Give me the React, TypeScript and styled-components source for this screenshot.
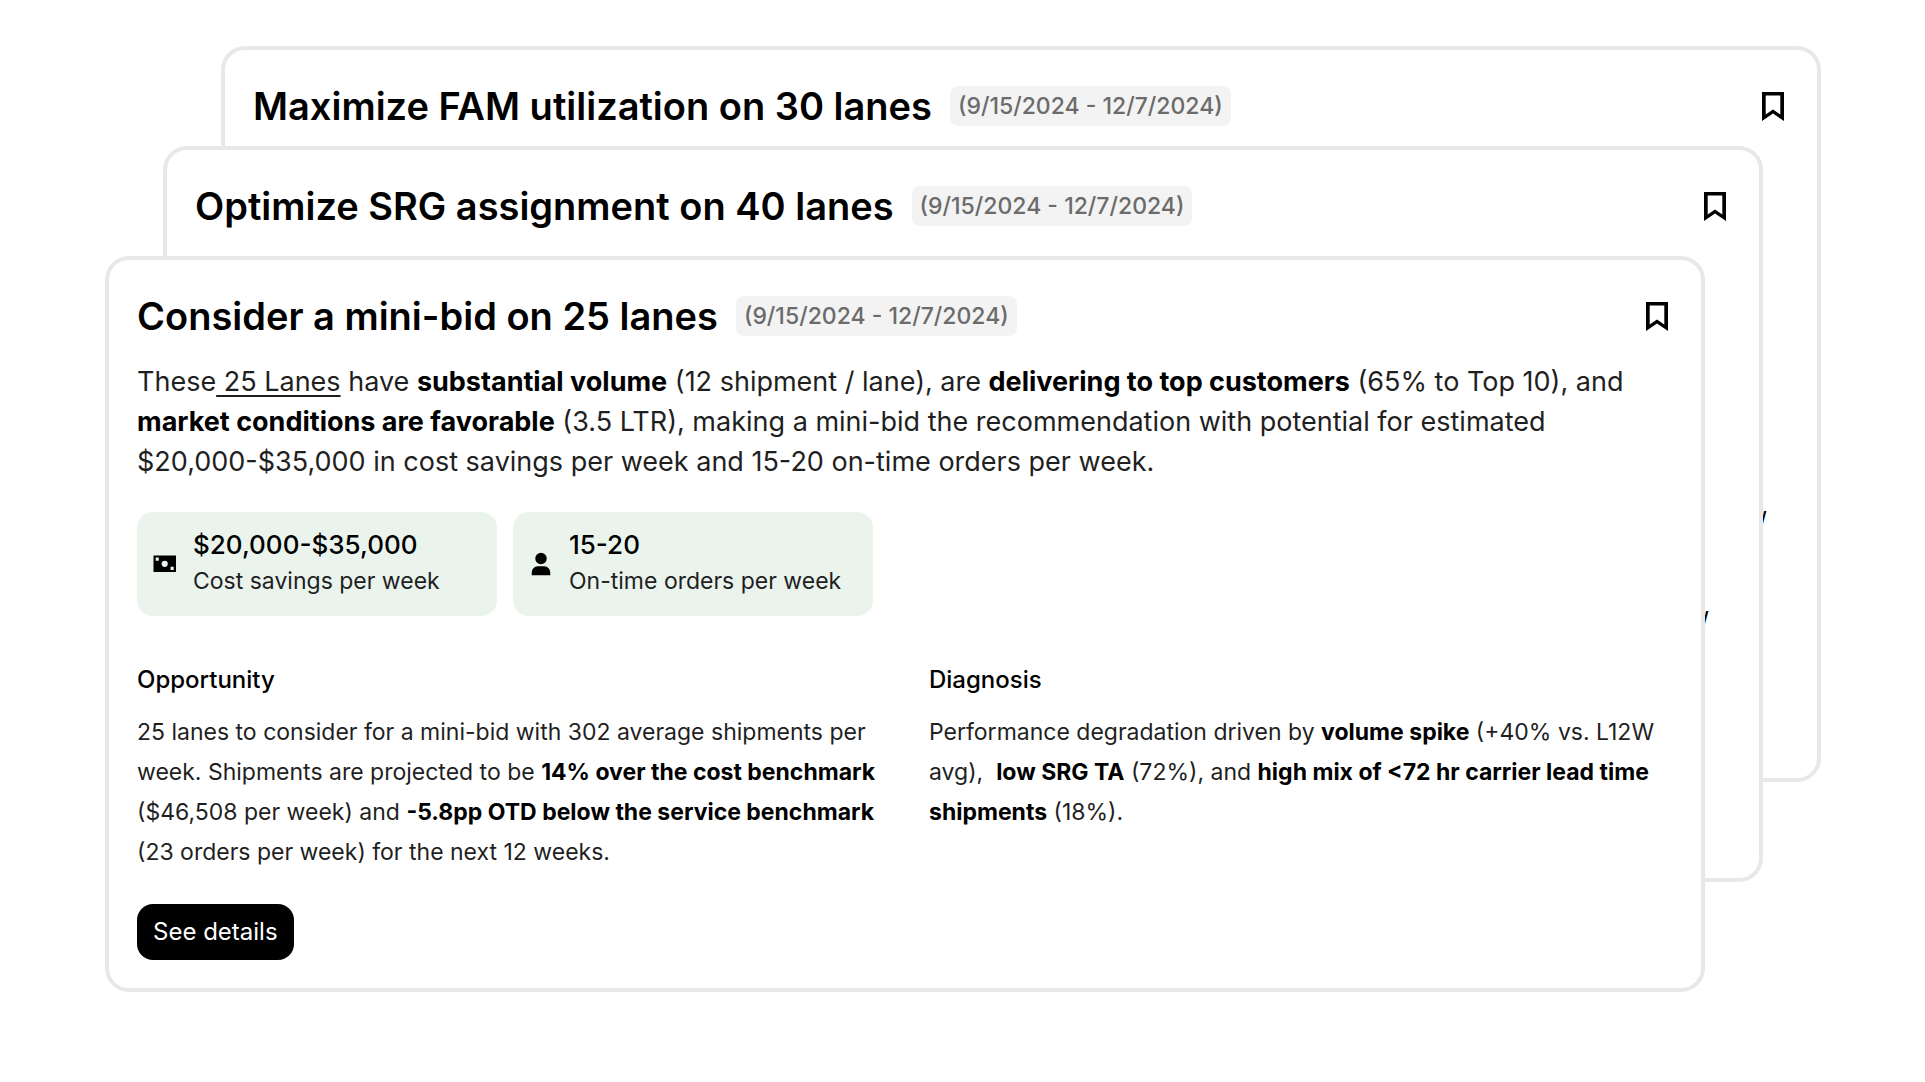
import React from 'react';
import styled, { createGlobalStyle } from 'styled-components';

const GlobalStyle = createGlobalStyle`
  *, *::before, *::after { box-sizing: border-box; }
  body {
    margin: 0;
    background: #fff;
    color: #000;
    font-family: Inter, "Liberation Sans", sans-serif;
  }
  h2, h3, p { margin: 0; }
`;

const Stack = styled.main`
  display: grid;
  padding: 46px 104px 44px 105px;
`;

const Card = styled.article<{ $inset: number; $top: number }>`
  grid-area: 1 / 1;
  display: flex;
  flex-direction: column;
  align-items: stretch;
  margin: ${p => p.$top}px ${p => 116 - p.$inset}px ${p => 210 - p.$top}px ${p => p.$inset}px;
  padding: 32px 28px 28px;
  border: 4px solid #e8e8e8;
  border-radius: 24px;
  background: #fff;
`;

const Header = styled.header`
  display: flex;
  align-items: center;
  gap: 18px;
`;

const Title = styled.h2`
  font-size: 38px;
  font-weight: 600;
  line-height: 48px;
`;

const DateRange = styled.span`
  padding: 0 8px;
  border-radius: 8px;
  background: #f3f3f3;
  color: #6b6b6b;
  font-size: 23px;
  font-weight: 500;
  line-height: 40px;
  white-space: nowrap;
`;

const IconButton = styled.button`
  display: flex;
  margin-left: auto;
  padding: 0;
  border: 0;
  background: none;
  color: inherit;
  cursor: pointer;
`;

const Lead = styled.p`
  margin-top: 22px;
  color: #1f1f1f;
  font-size: 27px;
  font-weight: 400;
  line-height: 40px;
`;

const Strong = styled.strong`
  color: #000;
  font-weight: 700;
`;

const LaneLink = styled.a`
  color: inherit;
  text-decoration: underline;
  text-decoration-thickness: 2px;
  text-underline-offset: 4px;
`;

const NoWrap = styled.span`
  white-space: nowrap;
`;

const Stats = styled.div`
  display: flex;
  gap: 16px;
  margin-top: 30px;
`;

const Stat = styled.div`
  display: flex;
  align-items: center;
  gap: 16px;
  width: 360px;
  min-height: 104px;
  padding: 0 16px;
  border-radius: 16px;
  background: #eaf4ed;
`;

const StatText = styled.div`
  padding-bottom: 2px;
`;

const StatValue = styled.div`
  font-size: 26px;
  font-weight: 500;
  line-height: 36px;
`;

const StatLabel = styled.div`
  color: #1f1f1f;
  font-size: 23px;
  font-weight: 400;
  line-height: 36px;
`;

const Columns = styled.div`
  display: grid;
  grid-template-columns: 1fr 1fr;
  gap: 48px;
  margin-top: 48px;
`;

const SectionTitle = styled.h3`
  font-size: 24px;
  font-weight: 500;
  line-height: 32px;
`;

const SectionText = styled.p`
  margin-top: 16px;
  color: #1f1f1f;
  font-size: 23px;
  font-weight: 400;
  line-height: 40px;
`;

const DetailsButton = styled.button`
  align-self: flex-start;
  margin-top: 32px;
  padding: 0 16px;
  border: 0;
  border-radius: 16px;
  background: #000;
  color: #fff;
  font-family: inherit;
  font-size: 24px;
  font-weight: 400;
  line-height: 56px;
  cursor: pointer;
`;

const PeekingText = styled.p`
  margin-top: 370px;
  padding-right: 22px;
  font-size: 23px;
  font-weight: 400;
  line-height: 40px;
  text-align: right;
`;

const BookmarkIcon = () => (
  <svg width="32" height="32" viewBox="0 0 32 32" fill="currentColor" fillRule="evenodd" aria-hidden="true">
    <path d="M5 2H27V31L16 23.6L5 31ZM8.7 5.5V24.4L16 19.6L23.3 24.4V5.5Z" />
  </svg>
);

const CashIcon = () => (
  <svg width="24" height="24" viewBox="0 0 24 24" fill="currentColor" fillRule="evenodd" aria-hidden="true">
    <path d="M.5 3.5H23V20H.5ZM2.7 5.5V8.8H5.8V5.5ZM17.6 14.7V18H20.7V14.7ZM11.7 8.7A3.1 3.1 0 1 0 11.7 14.9A3.1 3.1 0 1 0 11.7 8.7Z" />
  </svg>
);

const PersonIcon = () => (
  <svg width="24" height="24" viewBox="0 0 24 24" fill="currentColor" aria-hidden="true">
    <circle cx="12" cy="6.5" r="5.7" />
    <path d="M2.7 23.3V20.5A6 6 0 0 1 8.7 14.3H15.3A6 6 0 0 1 21.3 20.5V23.3Z" />
  </svg>
);

const CardHeader = ({ title }: { title: string }) => (
  <Header>
    <Title>{title}</Title>
    <DateRange>(9/15/2024 - 12/7/2024)</DateRange>
    <IconButton type="button" aria-label="Bookmark">
      <BookmarkIcon />
    </IconButton>
  </Header>
);

export default function App() {
  return (
    <>
      <GlobalStyle />
      <Stack>
        <Card $inset={116} $top={0}>
          <CardHeader title="Maximize FAM utilization on 30 lanes" />
          <PeekingText aria-hidden="true">W</PeekingText>
        </Card>

        <Card $inset={58} $top={100}>
          <CardHeader title="Optimize SRG assignment on 40 lanes" />
          <PeekingText aria-hidden="true">W</PeekingText>
        </Card>

        <Card $inset={0} $top={210}>
          <CardHeader title="Consider a mini-bid on 25 lanes" />
          <Lead>
            These<LaneLink href="#lanes"> 25 Lanes</LaneLink> have <Strong>substantial volume</Strong> (12 shipment /
            lane), are <Strong>delivering to top customers</Strong> (65% to Top 10), and{' '}
            <Strong>market conditions are favorable</Strong> (3.5 LTR), making a mini-bid the recommendation with
            potential for estimated <NoWrap>$20,000-$35,000</NoWrap> in cost savings per week and 15-20 on-time orders
            per week.
          </Lead>

          <Stats>
            <Stat>
              <CashIcon />
              <StatText>
                <StatValue>$20,000-$35,000</StatValue>
                <StatLabel>Cost savings per week</StatLabel>
              </StatText>
            </Stat>
            <Stat>
              <PersonIcon />
              <StatText>
                <StatValue>15-20</StatValue>
                <StatLabel>On-time orders per week</StatLabel>
              </StatText>
            </Stat>
          </Stats>

          <Columns>
            <section>
              <SectionTitle>Opportunity</SectionTitle>
              <SectionText>
                25 lanes to consider for a mini-bid with 302 average shipments per week. Shipments are projected to be{' '}
                <Strong>14% over the cost benchmark</Strong> ($46,508 per week) and{' '}
                <Strong>
                  <NoWrap>-5.8pp</NoWrap> OTD below the service benchmark
                </Strong>{' '}
                (23 orders per week) for the next 12 weeks.
              </SectionText>
            </section>
            <section>
              <SectionTitle>Diagnosis</SectionTitle>
              <SectionText>
                Performance degradation driven by <Strong>volume spike</Strong> (+40% vs. L12W avg),&nbsp;{' '}
                <Strong>low SRG TA</Strong> (72%), and{' '}
                <Strong>high mix of &lt;72 hr carrier lead time shipments</Strong> (18%).
              </SectionText>
            </section>
          </Columns>

          <DetailsButton type="button">See details</DetailsButton>
        </Card>
      </Stack>
    </>
  );
}
